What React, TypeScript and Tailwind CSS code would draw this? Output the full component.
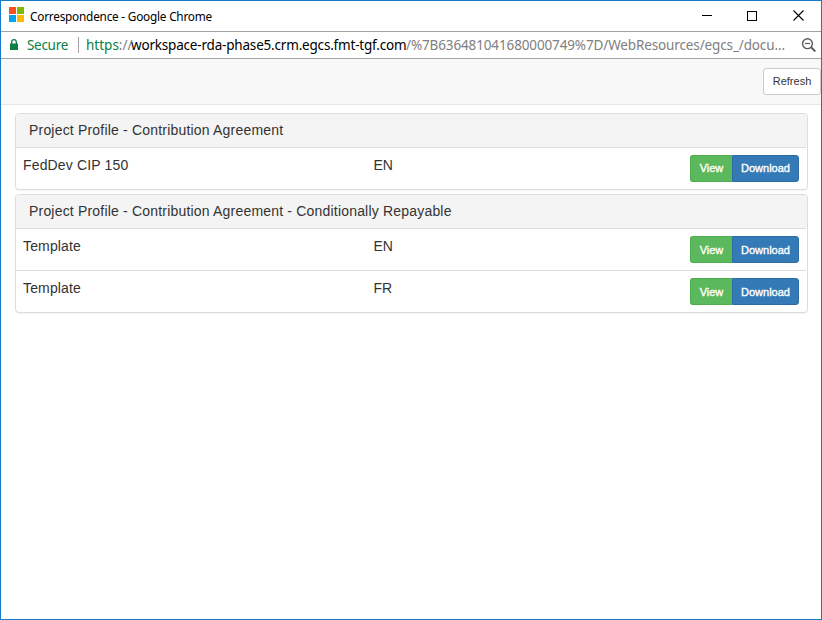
import type { ReactNode } from "react";

type Doc = { name: string; lang: string };

const groups: { title: string; docs: Doc[]; labelPad: string }[] = [
  {
    title: "Project Profile - Contribution Agreement",
    docs: [{ name: "FedDev CIP 150", lang: "EN" }],
    labelPad: "pb-[2px]",
  },
  {
    title: "Project Profile - Contribution Agreement - Conditionally Repayable",
    docs: [
      { name: "Template", lang: "EN" },
      { name: "Template", lang: "FR" },
    ],
    labelPad: "pb-0",
  },
];

function TitleBar() {
  return (
    <header className="flex h-[31px] shrink-0 items-center border-b border-[#a3a3a3] pr-[17px] pb-[3px] pl-2">
      <div className="grid grid-cols-[7px_7px] gap-px">
        <span className="h-[7px] bg-[#f8501f]" />
        <span className="h-[7px] bg-[#7eb900]" />
        <span className="h-[7px] bg-[#02a3ef]" />
        <span className="h-[7px] bg-[#feb800]" />
      </div>
      <h1 className="mt-[3px] ml-[6px] grow text-[11.8px] leading-[16px] tracking-[-0.22px] whitespace-nowrap text-black">
        Correspondence - Google Chrome
      </h1>
      <div className="mt-[2px] flex items-center text-black">
        <svg width="10" height="11" viewBox="0 0 10 11" shapeRendering="crispEdges">
          <path d="M0 5.5h10" stroke="currentColor" />
        </svg>
        <svg width="10" height="10" viewBox="0 0 10 10" shapeRendering="crispEdges" className="ml-[35px]">
          <path d="M.5.5h9v9h-9z" fill="none" stroke="currentColor" />
        </svg>
        <svg width="11" height="11" viewBox="0 0 11 11" className="ml-9">
          <path d="M.5.5l10 10M10.500.5l-10 10" stroke="currentColor" strokeWidth="1.1" />
        </svg>
      </div>
    </header>
  );
}

function AddressBar() {
  return (
    <div className="flex h-[27px] shrink-0 items-center border-b border-[#a3a3a3] pr-[5px] pl-[9px] text-[13.5px] leading-[20px] whitespace-nowrap">
      <svg width="8" height="12" viewBox="0 0 8 12" className="shrink-0 text-[#0b8043]">
        <path d="M0 4.500h8V11H0z" fill="currentColor" />
        <path d="M1.700 5V3a2.300 2.300 0 0 1 4.600 0v2" fill="none" stroke="currentColor" strokeWidth="1.300" />
      </svg>
      <span className="ml-[9px] w-[51px] shrink-0 tracking-[-0.3px] text-[#0b8043]">Secure</span>
      <span className="h-4 w-px shrink-0 bg-[#a3a3a3]" />
      <span className="ml-[7px] flex grow">
        <span className="w-[45px] shrink-0 text-[#808080]">
          <span className="text-[#0b8043]">https</span>://
        </span>
        <span className="w-[275px] shrink-0 tracking-[-0.19px] text-black">workspace-rda-phase5.crm.egcs.fmt-tgf.com</span>
        <span className="tracking-[-0.13px] text-[#808080]">/%7B636481041680000749%7D/WebResources/egcs_/docu...</span>
      </span>
      <svg width="14" height="14" viewBox="0 0 14 14" fill="none" stroke="#5a5a5a" className="shrink-0">
        <circle cx="5.500" cy="5.700" r="4.900" strokeWidth="1.400" />
        <path d="M3 5.500h5" strokeWidth="1.200" />
        <path d="M9.100 9.300l4.200 4.100" strokeWidth="2" />
      </svg>
    </div>
  );
}

function Action({ className, children }: { className: string; children: ReactNode }) {
  return (
    <button
      className={`h-[27px] border text-[11px] leading-[16px] text-white [-webkit-text-stroke:0.35px_white] ${className}`}
    >
      {children}
    </button>
  );
}

function Panel({ title, docs, labelPad }: { title: string; docs: Doc[]; labelPad: string }) {
  return (
    <section className="overflow-hidden rounded-[4px] border border-[#ddd] bg-white shadow-[0_1px_1px_rgba(0,0,0,0.05)]">
      <h2 className="h-[33px] bg-[#f4f4f4] pt-[6px] pl-[13px] text-[14px] leading-[20px] tracking-[0.19px]">{title}</h2>
      {docs.map((doc) => (
        <div
          key={doc.lang}
          className="mr-px flex h-[42px] border-t border-[#ddd] py-[7px] pr-[7px] pl-[7px] text-[14px] leading-[20px]"
        >
          <span className="w-[350.5px] tracking-[0.15px]">{doc.name}</span>
          <span className="grow">{doc.lang}</span>
          <span className="flex">
            <Action className={`w-[42px] rounded-l-[3px] border-r-0 border-[#4cae4c] bg-[#5cb85c] ${labelPad}`}>
              View
            </Action>
            <Action className={`w-[67px] rounded-r-[3px] border-[#2e6da4] bg-[#337ab7] ${labelPad}`}>Download</Action>
          </span>
        </div>
      ))}
    </section>
  );
}

export default function App() {
  return (
    <div className="flex h-[620px] w-[822px] flex-col overflow-hidden border border-[#1979ca] bg-white font-['Noto_Sans',sans-serif]">
      <TitleBar />
      <AddressBar />
      <div className="flex h-[46px] shrink-0 items-center justify-end border-b border-[#e7e7e7] bg-[#f8f8f8] font-['Liberation_Sans',sans-serif]">
        <button className="h-[27px] w-[58px] rounded-[3px] border border-[#ccc] bg-white pb-[2px] text-[11px] leading-[16px] text-[#333]">
          Refresh
        </button>
      </div>
      <main className="flex flex-col gap-1 pt-2 pr-[13px] pl-[14px] font-['Liberation_Sans',sans-serif] text-[#333]">
        {groups.map((group) => (
          <Panel key={group.title} {...group} />
        ))}
      </main>
    </div>
  );
}
